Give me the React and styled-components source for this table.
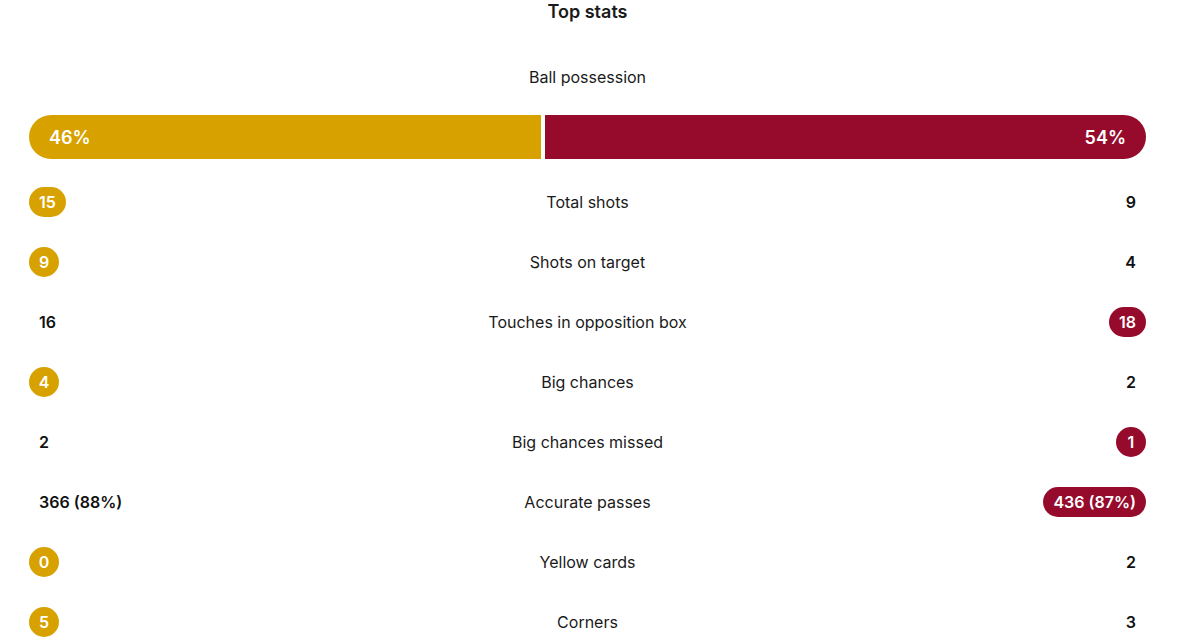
import React from "react"
import styled, { createGlobalStyle } from "styled-components"

const GOLD = "#d7a200"
const MAROON = "#960a2c"

const Global = createGlobalStyle`
  body {
    margin: 0;
    background: #fff;
    font-family: Inter, "Noto Sans", Arial, sans-serif;
    color: #1a1a1a;
  }
`

const Wrapper = styled.div`
  padding: 0 40px 0 29px;
`

const Title = styled.h2`
  margin: 0;
  font-size: 18px;
  font-weight: 600;
  line-height: 24px;
  text-align: center;
`

const Label = styled.div`
  font-size: 16px;
  line-height: 24px;
  text-align: center;
`

const PossessionLabel = styled(Label)`
  margin-top: 41px;
`

const Bar = styled.div`
  display: flex;
  gap: 4px;
  margin: 26px 0 13px;
  height: 44px;
`

const Segment = styled.div`
  box-sizing: border-box;
  flex: ${p => (p.$side === "left" ? `0 0 calc(${p.$value}% - 2px)` : "1 1 0")};
  display: flex;
  align-items: center;
  justify-content: ${p => (p.$side === "left" ? "flex-start" : "flex-end")};
  padding: 0 20px;
  background: ${p => p.$color};
  color: #fff;
  font-size: 18px;
  font-weight: 600;
  border-radius: ${p => (p.$side === "left" ? "22px 0 0 22px" : "0 22px 22px 0")};
`

const Row = styled.div`
  display: grid;
  grid-template-columns: 1fr auto 1fr;
  align-items: center;
  height: 60px;
`

const Side = styled.div`
  display: flex;
  justify-content: ${p => (p.$side === "left" ? "flex-start" : "flex-end")};
`

const Value = styled.span`
  display: inline-flex;
  align-items: center;
  justify-content: center;
  min-width: 30px;
  height: 30px;
  padding: ${p => (p.$color && p.$short ? "0" : "0 10px")};
  box-sizing: border-box;
  border-radius: 15px;
  font-size: 16px;
  font-weight: 600;
  color: ${p => (p.$color ? "#fff" : "#111")};
  background: ${p => p.$color || "transparent"};
`

const stats = [
  ["15", "Total shots", "9", "left"],
  ["9", "Shots on target", "4", "left"],
  ["16", "Touches in opposition box", "18", "right"],
  ["4", "Big chances", "2", "left"],
  ["2", "Big chances missed", "1", "right"],
  ["366 (88%)", "Accurate passes", "436 (87%)", "right"],
  ["0", "Yellow cards", "2", "left"],
  ["5", "Corners", "3", "left"],
]

const Stat = ({ text, color }) => (
  <Value $color={color} $short={text.length === 1}>
    {text}
  </Value>
)

export default function App() {
  return (
    <Wrapper>
      <Global />
      <Title>Top stats</Title>
      <PossessionLabel>Ball possession</PossessionLabel>
      <Bar>
        <Segment $side="left" $value={46} $color={GOLD}>46%</Segment>
        <Segment $side="right" $value={54} $color={MAROON}>54%</Segment>
      </Bar>
      {stats.map(([home, label, away, best]) => (
        <Row key={label}>
          <Side $side="left">
            <Stat text={home} color={best === "left" ? GOLD : null} />
          </Side>
          <Label>{label}</Label>
          <Side $side="right">
            <Stat text={away} color={best === "right" ? MAROON : null} />
          </Side>
        </Row>
      ))}
    </Wrapper>
  )
}
